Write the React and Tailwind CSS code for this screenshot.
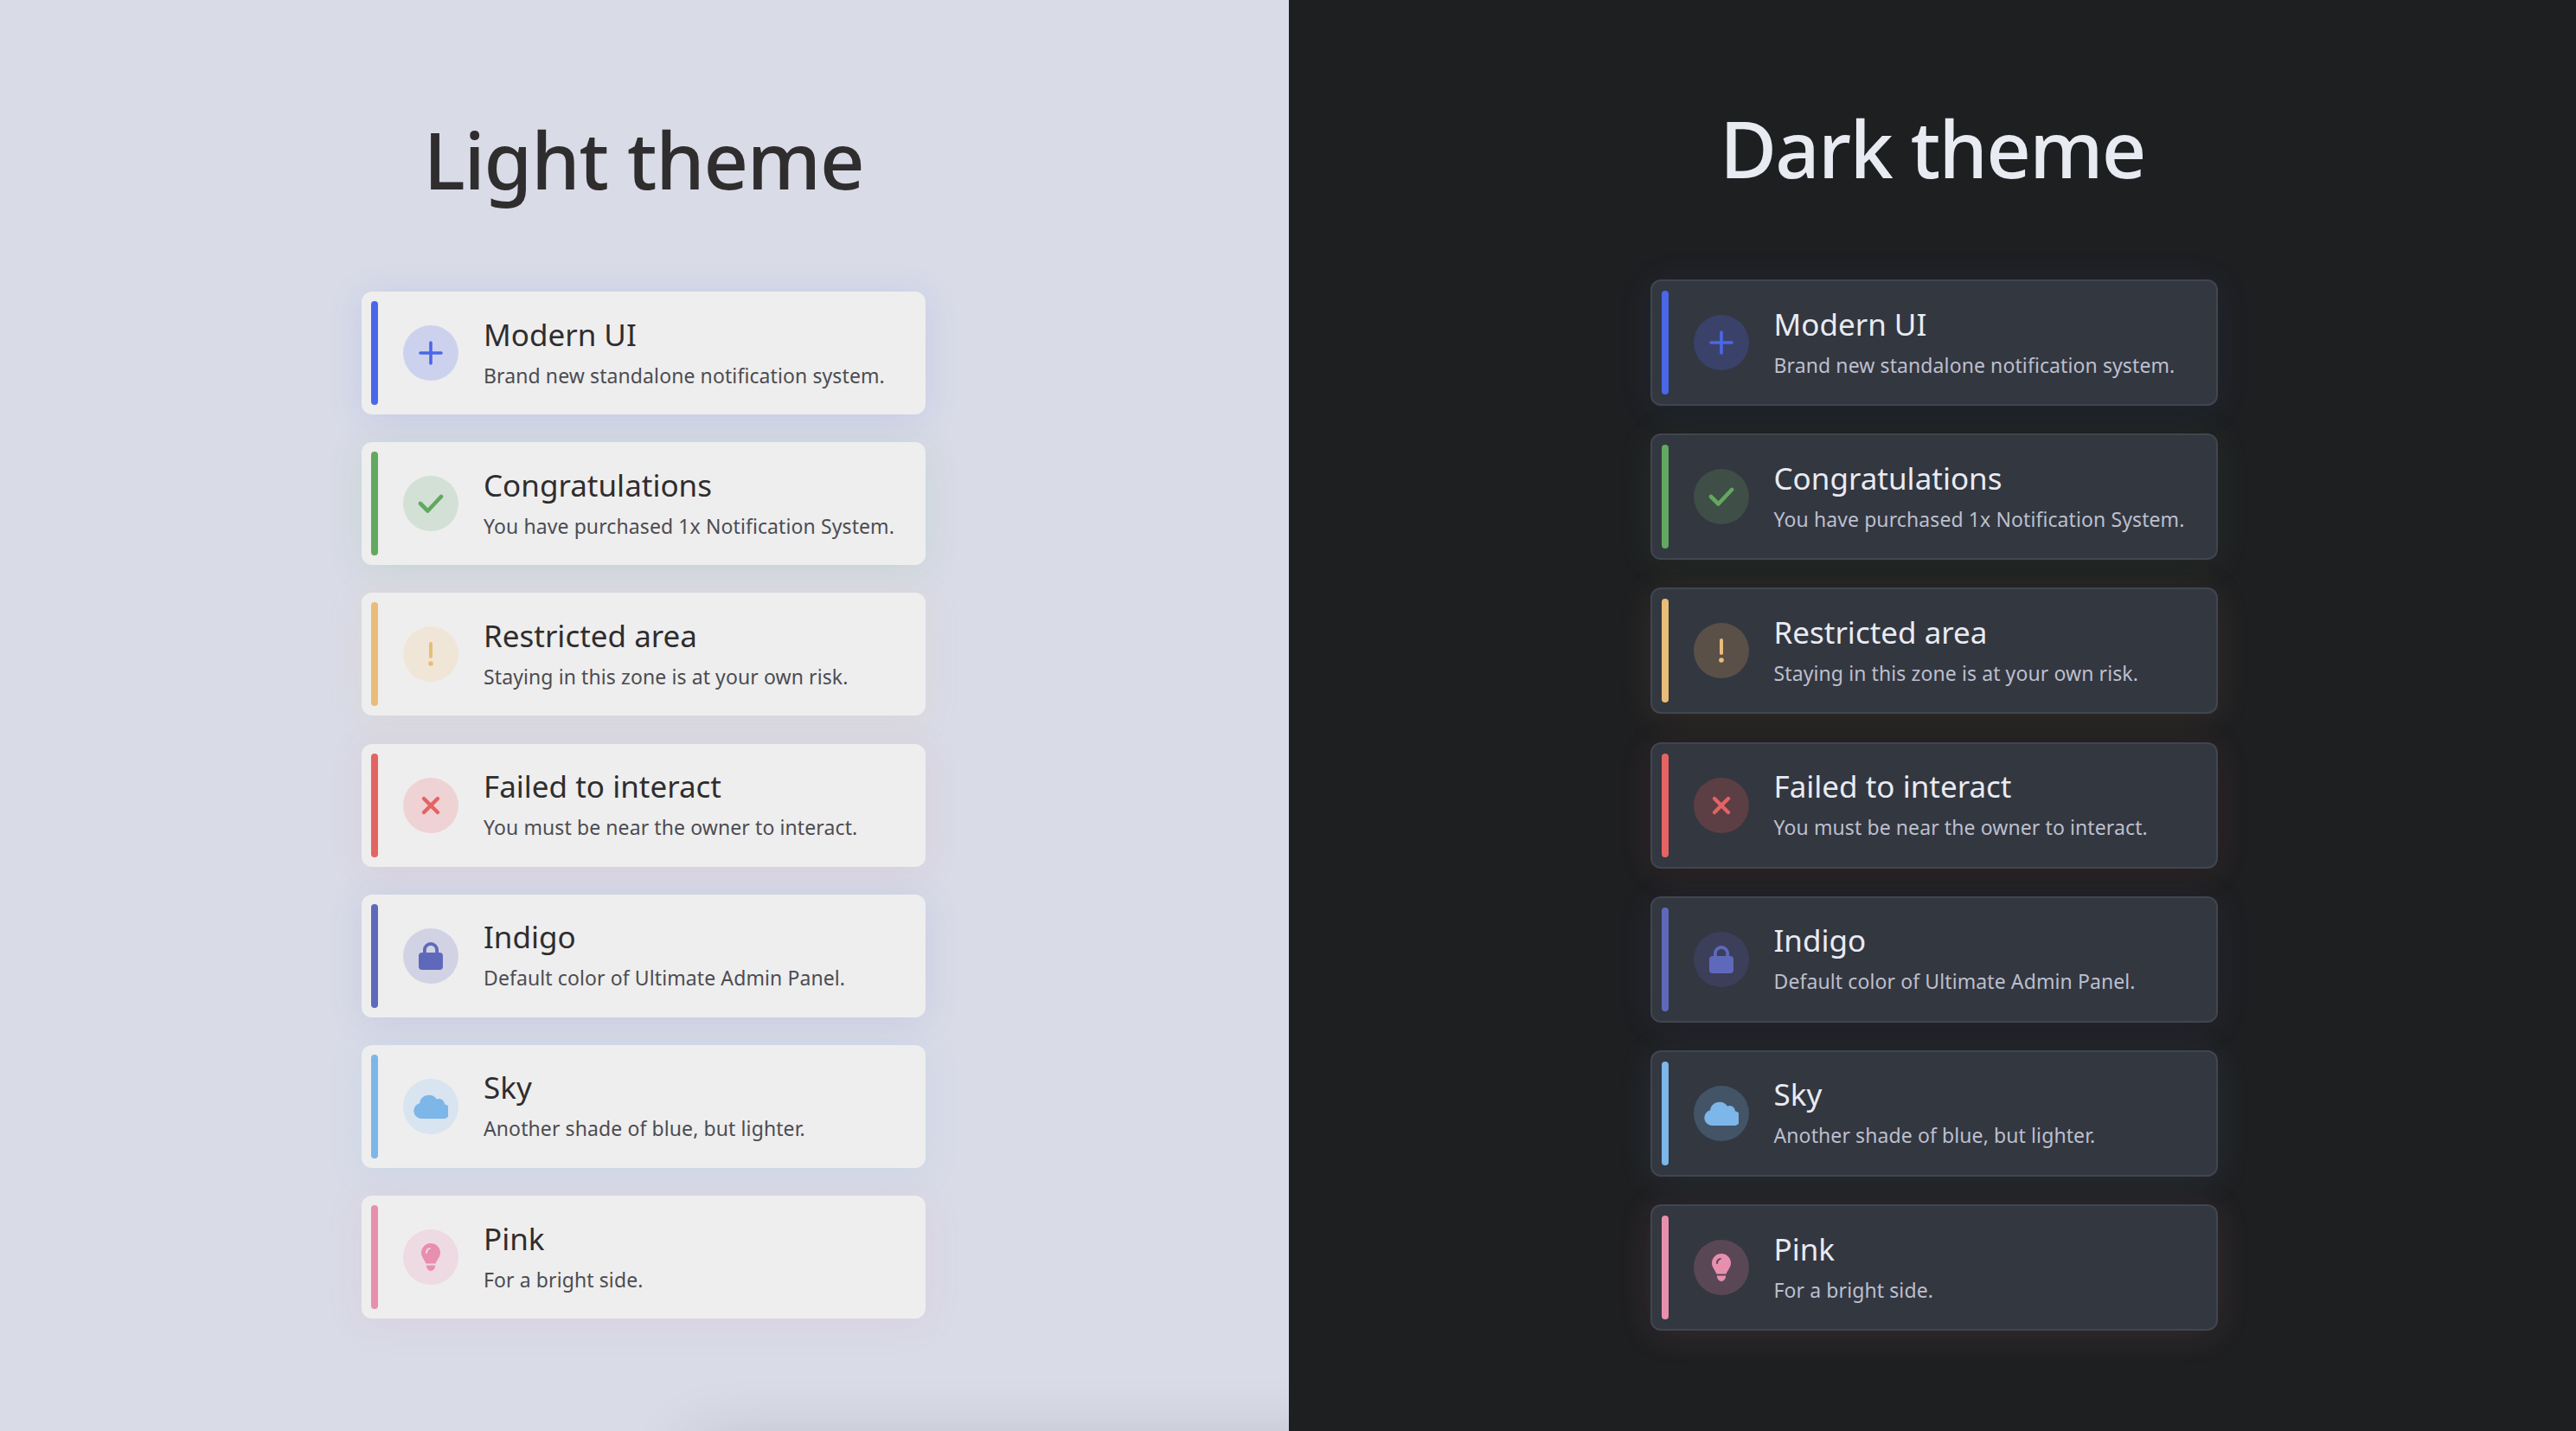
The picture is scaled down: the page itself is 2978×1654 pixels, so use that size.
import React from 'react';

const items = [
    { title: 'Modern UI', text: 'Brand new standalone notification system.', icon: 'plus', bar: 'bg-[#4a67e8]', lightCircle: 'bg-[#ccd2ee]', darkCircle: 'bg-[#3a4269]', iconText: 'text-[#4a67e8]', lightShadow: 'shadow-[0_4px_40px_rgba(74,103,232,0.14)]', darkShadow: 'shadow-[0_4px_40px_rgba(74,103,232,0.1)]' },
    { title: 'Congratulations', text: 'You have purchased 1x Notification System.', icon: 'check', bar: 'bg-[#62a860]', lightCircle: 'bg-[#d3e0d5]', darkCircle: 'bg-[#3f4e46]', iconText: 'text-[#62a860]', lightShadow: 'shadow-[0_4px_40px_rgba(98,168,96,0.14)]', darkShadow: 'shadow-[0_4px_40px_rgba(98,168,96,0.1)]' },
    { title: 'Restricted area', text: 'Staying in this zone is at your own risk.', icon: 'warn', bar: 'bg-[#e8bd78]', lightCircle: 'bg-[#f0e6d8]', darkCircle: 'bg-[#5a5048]', iconText: 'text-[#e8bd78]', lightShadow: 'shadow-[0_4px_40px_rgba(232,189,120,0.13)]', darkShadow: 'shadow-[0_4px_40px_rgba(232,189,120,0.1)]' },
    { title: 'Failed to interact', text: 'You must be near the owner to interact.', icon: 'cross', bar: 'bg-[#e46363]', lightCircle: 'bg-[#efd2d3]', darkCircle: 'bg-[#5c3f44]', iconText: 'text-[#e46363]', lightShadow: 'shadow-[0_4px_40px_rgba(228,99,99,0.1)]', darkShadow: 'shadow-[0_4px_40px_rgba(228,99,99,0.1)]' },
    { title: 'Indigo', text: 'Default color of Ultimate Admin Panel.', icon: 'lock', bar: 'bg-[#5f69bb]', lightCircle: 'bg-[#d1d3e4]', darkCircle: 'bg-[#3c3f5a]', iconText: 'text-[#5f69bb]', lightShadow: 'shadow-[0_4px_40px_rgba(95,105,187,0.14)]', darkShadow: 'shadow-[0_4px_40px_rgba(95,105,187,0.1)]' },
    { title: 'Sky', text: 'Another shade of blue, but lighter.', icon: 'cloud', bar: 'bg-[#7db6e8]', lightCircle: 'bg-[#d8e4ef]', darkCircle: 'bg-[#435467]', iconText: 'text-[#7db6e8]', lightShadow: 'shadow-[0_4px_40px_rgba(125,182,232,0.14)]', darkShadow: 'shadow-[0_4px_40px_rgba(125,182,232,0.1)]' },
    { title: 'Pink', text: 'For a bright side.', icon: 'bulb', bar: 'bg-[#e88fae]', lightCircle: 'bg-[#eedae2]', darkCircle: 'bg-[#5a4756]', iconText: 'text-[#e88fae]', lightShadow: 'shadow-[0_4px_40px_rgba(232,143,174,0.14)]', darkShadow: 'shadow-[0_4px_40px_rgba(232,143,174,0.12)]' },
];

const Icon = ({ name }) => {
    if (name === 'plus') return (
        <svg width="28" height="28" viewBox="0 0 28 28" fill="none" stroke="currentColor" strokeWidth="3.6" strokeLinecap="round"><path d="M14 2v24M2 14h24" /></svg>
    );
    if (name === 'check') return (
        <svg width="30" height="22" viewBox="0 0 30 22" fill="none" stroke="currentColor" strokeWidth="4.6" strokeLinecap="round" strokeLinejoin="round"><path d="M3 11l8.500 8.500L27 3" /></svg>
    );
    if (name === 'warn') return (
        <svg width="8" height="28" viewBox="0 0 8 28" fill="currentColor"><rect x="2" y="0" width="4" height="19" rx="2" /><circle cx="4" cy="25" r="2.8" /></svg>
    );
    if (name === 'cross') return (
        <svg width="24" height="24" viewBox="0 0 24 24" fill="none" stroke="currentColor" strokeWidth="4.4" strokeLinecap="round"><path d="M4 4l16 16M20 4L4 20" /></svg>
    );
    if (name === 'lock') return (
        <svg width="28" height="32" viewBox="0 0 28 32" fill="currentColor">
            <path d="M5 14V9a9 9 0 0118 0v5h-3.800V9a5.200 5.200 0 00-10.400 0v5z" />
            <rect x="0" y="12" width="28" height="20" rx="4" />
        </svg>
    );
    if (name === 'cloud') return (
        <svg width="40" height="28" viewBox="0 0 40 28" fill="currentColor">
            <path d="M9 28a9 9 0 01-2-17.700A11 11 0 0127 5.600a6.500 6.500 0 019 5.600A8.600 8.600 0 0132 28z" />
        </svg>
    );
    return (
        <svg width="22" height="32" viewBox="0 0 22 32" fill="currentColor">
            <path fillRule="evenodd" d="M11 0a11 11 0 00-11 11c0 5 3.600 7.600 5.400 12.400h11.200C18.400 18.600 22 16 22 11A11 11 0 0011 0zM5 11a6 6 0 015-6 1 1 0 01.4 1.800 4.500 4.500 0 00-3.400 4.200 1 1 0 01-2 0z" />
            <path d="M5.800 25.500h10.400A5.400 6.500 0 0111 32a5.400 6.500 0 01-5.200-6.500z" />
        </svg>
    );
};

const Card = ({ item, dark }) => (
    <div className={`flex items-center w-full rounded-xl p-[11px] ${dark ? 'bg-[#333740] border-2 border-[#41454f] ' + item.darkShadow : 'bg-[#eeeeee] ' + item.lightShadow}`}>
        <div className={`w-2 h-[120px] rounded-full shrink-0 ${item.bar}`} />
        <div className={`w-16 h-16 ml-[29px] rounded-full shrink-0 flex items-center justify-center ${dark ? item.darkCircle : item.lightCircle} ${item.iconText}`}>
            <Icon name={item.icon} />
        </div>
        <div className="ml-[29px] flex flex-col pb-1">
            <span className={`text-[35px] leading-[50px] ${dark ? 'text-[#e9ebf3]' : 'text-[#2f2d2e]'}`}>{item.title}</span>
            <span className={`text-[23px] leading-[34px] tracking-[0.1px] mt-[5px] ${dark ? 'text-[#bcbfce]' : 'text-[#4c4c52]'}`}>{item.text}</span>
        </div>
    </div>
);

const Panel = ({ title, dark }) => (
    <div className={`relative overflow-hidden flex flex-col items-center h-full ${dark ? 'w-[1488px] bg-[#1e1f21] pt-[111px]' : 'w-[1490px] pr-[2px] bg-[#d9dbe7] pt-[124px]'}`}>
        <h1 className={`text-[90px] leading-[120px] font-medium ${dark ? 'text-[#e9ebf3] tracking-[-1.7px]' : 'text-[#2f2d2e] tracking-[-1.2px]'}`}>{title}</h1>
        <div className={`flex flex-col gap-[32.2px] ${dark ? 'w-[656px] ml-[3px] mt-[92px]' : 'w-[652px] mt-[93px]'}`}>
            {items.map((item) => <Card key={item.title} item={item} dark={dark} />)}
        </div>
        {!dark && <div className="absolute left-[800px] right-[-100px] top-[1670px] h-[100px] rounded-xl shadow-[0_0_80px_rgba(0,0,0,0.16)]" />}
    </div>
);

export default function App() {
    return (
        <div className="flex w-[2978px] h-[1654px] overflow-hidden font-['Noto_Sans',sans-serif]">
            <Panel title="Light theme" />
            <Panel title="Dark theme" dark />
        </div>
    );
}
